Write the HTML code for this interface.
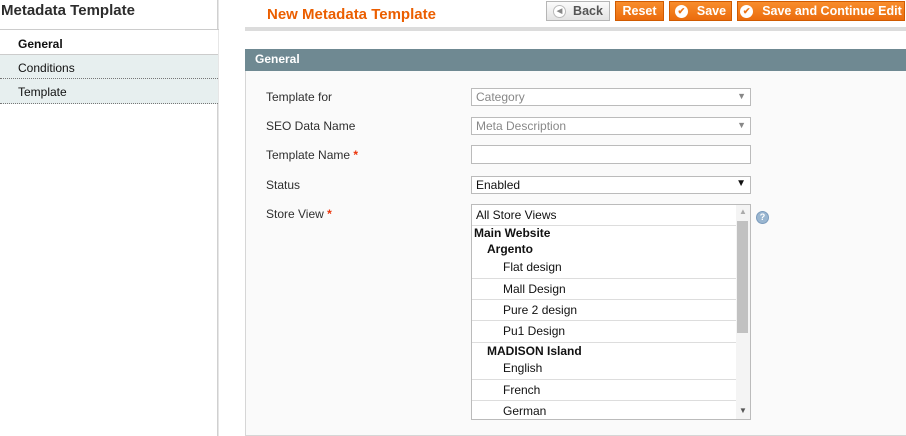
<!DOCTYPE html>
<html><head><style>
*{box-sizing:border-box;margin:0;padding:0}
body{width:906px;height:436px;overflow:hidden;background:#fff;font-family:"Liberation Sans",Arial,sans-serif;font-size:12px;color:#2f2f2f;position:relative}
.abs{position:absolute}
.side{left:0;top:0;width:218px;height:436px;border-right:1px solid #d0d0d0;box-shadow:1px 0 0 #e6e6e6}
.side h3{position:absolute;left:1px;top:2px;font-size:15px;font-weight:bold;color:#2d2d2d}
.tab{position:absolute;left:0;width:218px;height:25px;padding:7px 0 0 18px;font-size:12px;color:#111}
.btn{position:absolute;top:1px;height:20px;background:linear-gradient(#f88d2c,#eb6c0d);border:1px solid #d05a00;color:#fff;font-weight:bold;font-size:12.5px;display:flex;align-items:center;justify-content:center;line-height:1}
.chk{display:inline-block;width:13px;height:13px;border-radius:50%;background:#fff;color:#ed7314;font-size:9px;line-height:13px;text-align:center;margin-right:9px}
.lbl{position:absolute;left:266px;font-size:12px;color:#2f2f2f}
.req{color:#eb340a;font-weight:bold}
.sel{position:absolute;left:471px;width:280px;height:18px;border:1px solid #bbb;background:#fff;padding:1px 4px;font-size:12px}
.opt{position:absolute;left:0;width:264px;font-size:12px;color:#111}
.ln{position:absolute;left:0;width:264px;height:1px;background:#ddd}
</style></head><body>
<div class="abs side">
<h3>Metadata Template</h3>
<div class="abs" style="left:0;top:29px;width:219px;height:1px;background:#ccc"></div>
<div class="tab" style="top:30px;font-weight:bold;background:#fff">General</div>
<div class="tab" style="top:54px;background:#e7efef;border-top:1px solid #ccc;border-bottom:1px dotted #777;height:25px;padding-top:6px">Conditions</div>
<div class="tab" style="top:79px;background:#e7efef;border-bottom:1px dotted #777;height:25px;padding-top:6px">Template</div>
</div>
<div class="abs" style="left:267px;top:6px;color:#eb5e00;font-weight:bold;font-size:15px">New Metadata Template</div>
<div class="btn" style="left:546px;width:64px;background:linear-gradient(#fbfbfb,#e3e3e3);border-color:#b6b6b6;color:#555"><span class="chk" style="background:#fff;border:1px solid #bbb;color:#888;font-size:7px;line-height:11px;margin-right:7px">◀</span>Back</div>
<div class="btn" style="left:615px;width:49px">Reset</div>
<div class="btn" style="left:669px;width:63px"><span class="chk">✔</span>Save</div>
<div class="btn" style="left:737px;width:168px"><span class="chk">✔</span>Save and Continue Edit</div>
<div class="abs" style="left:245px;top:27px;width:661px;height:4px;background:#dcdcdc"></div>
<div class="abs" style="left:245px;top:49px;width:661px;height:22px;background:#6f8992;color:#fff;font-weight:bold;padding:3px 0 0 10px;font-size:12px">General</div>
<div class="abs" style="left:245px;top:71px;width:661px;height:365px;background:#fafafa;border-left:1px solid #d6d6d6;border-bottom:1px solid #d6d6d6"></div>
<div class="lbl" style="top:90px">Template for</div>
<div class="lbl" style="top:119px">SEO Data Name</div>
<div class="lbl" style="top:148px">Template Name <span class="req">*</span></div>
<div class="lbl" style="top:178px">Status</div>
<div class="lbl" style="top:207px">Store View <span class="req">*</span></div>
<div class="sel" style="top:88px;color:#888">Category<span style="position:absolute;right:4px;top:2px;font-size:9px">▼</span></div>
<div class="sel" style="top:117px;color:#888">Meta Description<span style="position:absolute;right:4px;top:2px;font-size:9px">▼</span></div>
<div class="sel" style="top:145px;height:19px"></div>
<div class="sel" style="top:176px;color:#111">Enabled<span style="position:absolute;right:4px;top:1px;font-size:10px">▼</span></div>
<div class="sel" style="top:204px;height:216px;padding:0;overflow:hidden">
<div class="opt" style="top:3px;left:4px">All Store Views</div>
<div class="ln" style="top:20px"></div>
<div class="opt" style="top:21px;left:2px;font-weight:bold">Main Website</div>
<div class="opt" style="top:37px;left:15px;font-weight:bold">Argento</div>
<div class="opt" style="top:55px;left:31px">Flat design</div>
<div class="ln" style="top:73px"></div>
<div class="opt" style="top:77px;left:31px">Mall Design</div>
<div class="ln" style="top:94px"></div>
<div class="opt" style="top:98px;left:31px">Pure 2 design</div>
<div class="ln" style="top:115px"></div>
<div class="opt" style="top:119px;left:31px">Pu1 Design</div>
<div class="ln" style="top:137px"></div>
<div class="opt" style="top:139px;left:15px;font-weight:bold">MADISON Island</div>
<div class="opt" style="top:156px;left:31px">English</div>
<div class="ln" style="top:174px"></div>
<div class="opt" style="top:178px;left:31px">French</div>
<div class="ln" style="top:195px"></div>
<div class="opt" style="top:199px;left:31px">German</div>
<div class="abs" style="left:264px;top:0;width:14px;height:214px;background:#f4f4f4"></div>
<div class="abs" style="left:265px;top:16px;width:11px;height:112px;background:#c1c1c1"></div>
<div class="abs" style="left:267px;top:2px;font-size:8px;color:#aaa">▲</div>
<div class="abs" style="left:267px;top:201px;font-size:8px;color:#555">▼</div>
</div>
<div class="abs" style="left:756px;top:211px;width:13px;height:13px;border-radius:50%;background:#9ab6d0;border:1px solid #7c9cbd;color:#fff;font-size:9px;font-weight:bold;text-align:center;line-height:11px">?</div>
</body></html>
